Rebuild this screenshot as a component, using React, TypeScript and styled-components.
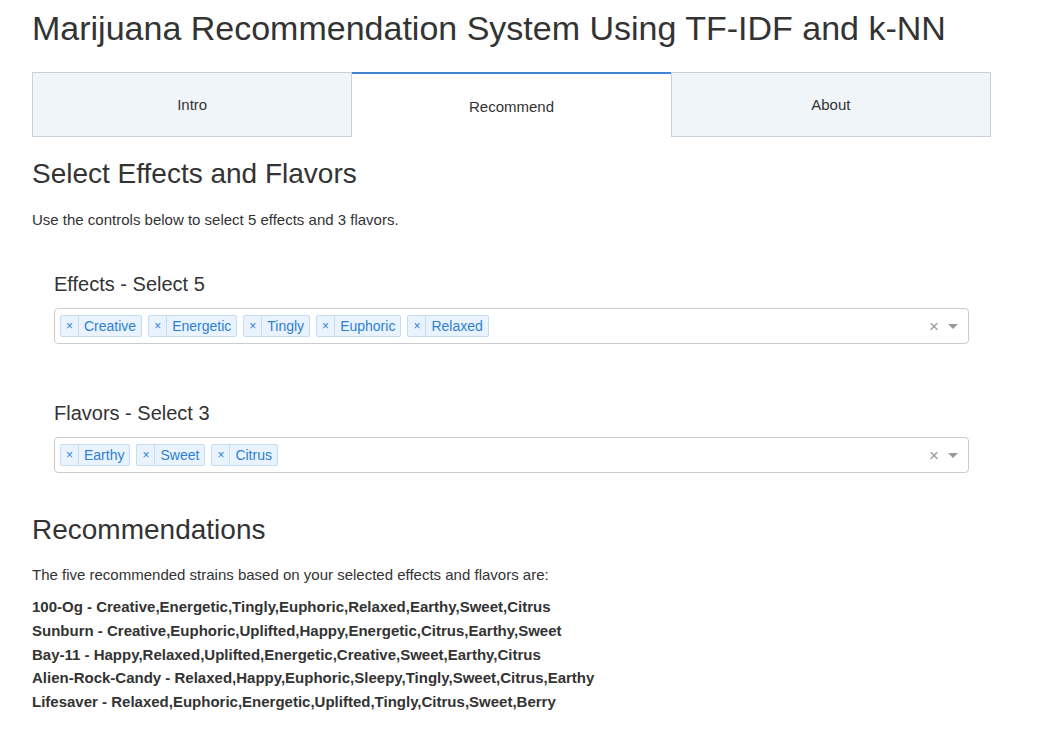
import React from 'react';
import styled, { createGlobalStyle, css } from 'styled-components';

const GlobalStyle = createGlobalStyle`
	body {
		margin: 0;
		background: #fff;
		color: #333;
		font-family: 'Liberation Sans', Arial, sans-serif;
		font-size: 15px;
	}
`;

const Page = styled.div`
	padding: 0 46px 20px 32px;
`;

const Title = styled.h1`
	margin: 10px 0 0;
	font-size: 34px;
	font-weight: 400;
	line-height: 1.1;
	color: #333;
	white-space: nowrap;
`;

const TabBar = styled.div`
	display: flex;
	margin-top: 25px;
	height: 65px;
`;

const Tab = styled.div<{ $active?: boolean }>`
	flex: 1;
	display: flex;
	align-items: center;
	justify-content: center;
	box-sizing: border-box;
	font-size: 15px;
	color: #333;
	${(p) =>
		p.$active
			? css`
					background: #fff;
					border-top: 2px solid #3f86d6;
					padding-top: 2px;
				`
			: css`
					background: #f0f5fa;
					border: 1px solid #c9d2db;
				`}
`;

const SectionTitle = styled.h2<{ $top: number }>`
	margin: ${(p) => p.$top}px 0 0;
	font-size: 28px;
	font-weight: 400;
	line-height: 1.1;
	color: #333;
`;

const Text = styled.p<{ $top: number }>`
	margin: ${(p) => p.$top}px 0 0;
	line-height: 20px;
`;

const InputGroup = styled.div<{ $top: number }>`
	margin: ${(p) => p.$top}px 22px 0;
`;

const Label = styled.div`
	font-size: 20px;
	line-height: 22px;
	margin-bottom: 13px;
`;

const SelectBox = styled.div`
	display: flex;
	align-items: center;
	box-sizing: border-box;
	height: 36px;
	padding: 0 10px 0 5px;
	border: 1px solid #ccc;
	border-radius: 4px;
	background: #fff;
`;

const Tags = styled.div`
	flex: 1;
	display: flex;
	gap: 6px;
`;

const TagItem = styled.div`
	display: flex;
	align-items: stretch;
	height: 22px;
	box-sizing: border-box;
	border: 1px solid #c6dcf1;
	border-radius: 2px;
	background: #e9f3fd;
	color: #2f7fd3;
	font-size: 14px;
	line-height: 20px;
`;

const TagRemove = styled.span`
	width: 17px;
	text-align: center;
	font-size: 12px;
	border-right: 1px solid #c6dcf1;
`;

const TagLabel = styled.span`
	padding: 0 5px 0 5px;
`;

const Controls = styled.div`
	display: flex;
	align-items: center;
	gap: 9px;
	color: #999;
`;

const ClearIcon = styled.span`
	font-size: 17px;
	line-height: 1;
`;

const Caret = styled.span`
	width: 0;
	height: 0;
	border-left: 5px solid transparent;
	border-right: 5px solid transparent;
	border-top: 5px solid #999;
`;

const ResultList = styled.div`
	margin-top: 10px;
	font-weight: 700;
	line-height: 23.8px;
`;

const effects = ['Creative', 'Energetic', 'Tingly', 'Euphoric', 'Relaxed'];
const flavors = ['Earthy', 'Sweet', 'Citrus'];

const results = [
	'100-Og - Creative,Energetic,Tingly,Euphoric,Relaxed,Earthy,Sweet,Citrus',
	'Sunburn - Creative,Euphoric,Uplifted,Happy,Energetic,Citrus,Earthy,Sweet',
	'Bay-11 - Happy,Relaxed,Uplifted,Energetic,Creative,Sweet,Earthy,Citrus',
	'Alien-Rock-Candy - Relaxed,Happy,Euphoric,Sleepy,Tingly,Sweet,Citrus,Earthy',
	'Lifesaver - Relaxed,Euphoric,Energetic,Uplifted,Tingly,Citrus,Sweet,Berry',
];

const MultiSelect: React.FC<{ items: string[] }> = ({ items }) => (
	<SelectBox>
		<Tags>
			{items.map((item) => (
				<TagItem key={item}>
					<TagRemove>×</TagRemove>
					<TagLabel>{item}</TagLabel>
				</TagItem>
			))}
		</Tags>
		<Controls>
			<ClearIcon>×</ClearIcon>
			<Caret />
		</Controls>
	</SelectBox>
);

const App: React.FC = () => (
	<Page>
		<GlobalStyle />
		<Title>Marijuana Recommendation System Using TF-IDF and k-NN</Title>
		<TabBar>
			<Tab>Intro</Tab>
			<Tab $active>Recommend</Tab>
			<Tab>About</Tab>
		</TabBar>
		<SectionTitle $top={22}>Select Effects and Flavors</SectionTitle>
		<Text $top={20}>Use the controls below to select 5 effects and 3 flavors.</Text>
		<InputGroup $top={43}>
			<Label>Effects - Select 5</Label>
			<MultiSelect items={effects} />
		</InputGroup>
		<InputGroup $top={58}>
			<Label>Flavors - Select 3</Label>
			<MultiSelect items={flavors} />
		</InputGroup>
		<SectionTitle $top={42}>Recommendations</SectionTitle>
		<Text $top={19}>The five recommended strains based on your selected effects and flavors are:</Text>
		<ResultList>
			{results.map((r) => (
				<div key={r}>{r}</div>
			))}
		</ResultList>
	</Page>
);

export default App;
